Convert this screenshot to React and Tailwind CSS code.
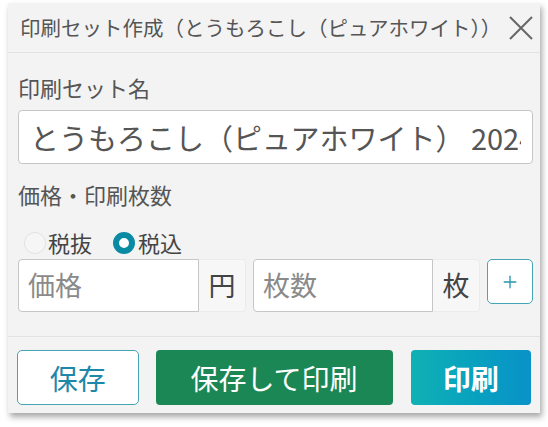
import { Plus } from 'lucide-react'

const font = { fontFamily: '"Noto Sans CJK JP", "Noto Sans", sans-serif' }

function AddonInput({ placeholder, unit, width }) {
  return (
    <div className={`flex h-[53px] ${width}`}>
      <input
        placeholder={placeholder}
        className="min-w-0 flex-1 rounded-l-[4px] border border-[#c6c6c6] bg-white px-[9px] text-[27px] text-[#555] placeholder:text-[#8a8a8a] outline-none"
      />
      <span className="flex w-[47px] shrink-0 items-center justify-center rounded-r-[4px] border border-l-0 border-[#ebebeb] bg-[#f7f7f7] text-[27px] text-[#444]">
        {unit}
      </span>
    </div>
  )
}

export default function App() {
  return (
    <div className="h-[427px] w-[548px] bg-white pl-2 pt-[3px]" style={font}>
      <div className="w-[532px] bg-[#f3f3f3] shadow-[2px_4px_6px_rgba(0,0,0,0.35)]">
        {/* Header */}
        <div className="flex h-[50px] items-center justify-between border-b border-[#e2e2e2] pl-3 pr-[7px]">
          <h1 className="whitespace-nowrap text-[20.5px] font-normal text-[#555]">
            印刷セット作成（とうもろこし（ピュアホワイト））
          </h1>
          <svg width="24" height="24" viewBox="0 0 24 24" className="text-[#666]">
            <path d="M1 1 L23 23 M23 1 L1 23" stroke="currentColor" strokeWidth="2" fill="none" />
          </svg>
        </div>

        {/* Body */}
        <div className="border-b border-[#e2e2e2] pb-6 pl-[10px] pr-[7px] pt-[18px]">
          <p className="text-[22px] leading-[33px] text-[#555]">印刷セット名</p>
          <input
            defaultValue="とうもろこし（ピュアホワイト） 2024"
            className="mt-[6px] h-[54px] w-full rounded-[4px] border border-[#c6c6c6] bg-white px-[11px] text-[29px] text-[#555] outline-none"
          />
          <p className="mt-[14px] text-[22px] leading-[33px] text-[#555]">価格・印刷枚数</p>
          <div className="mt-[15px] flex h-[33px] items-center pl-[6px] text-[22px] text-[#444]">
            <label className="flex items-center gap-[2px]">
              <span className="h-[22px] w-[22px] rounded-full border border-[#e2e2e2] bg-[#f6f6f6]" />
              税抜
            </label>
            <label className="ml-[21px] flex items-center gap-[3px]">
              <span className="h-[22px] w-[22px] rounded-full border-[6px] border-[#0b8aa3] bg-white" />
              税込
            </label>
          </div>
          <div className="flex items-start gap-[7px]">
            <AddonInput placeholder="価格" unit="円" width="w-[228px]" />
            <AddonInput placeholder="枚数" unit="枚" width="w-[227px]" />
            <button className="flex h-[45px] w-[46px] items-center justify-center rounded-[5px] border border-[#43a5b5] bg-white text-[#2596ac]">
              <Plus size={20} strokeWidth={1.6} />
            </button>
          </div>
        </div>

        {/* Footer */}
        <div className="flex px-[9px] pb-2 pt-[13px]">
          <button className="h-[55px] w-[122px] rounded-[5px] border border-[#43a5b5] bg-white text-[28px] text-[#1f87a8]">
            保存
          </button>
          <button className="ml-[17px] h-[55px] w-[238px] rounded-[4px] bg-[#1b8754] text-[28px] text-white">
            保存して印刷
          </button>
          <button className="ml-[18px] h-[55px] w-[121px] rounded-[4px] bg-gradient-to-r from-[#10b1b4] to-[#0a92c8] text-[28px] font-bold text-white">
            印刷
          </button>
        </div>
      </div>
    </div>
  )
}
